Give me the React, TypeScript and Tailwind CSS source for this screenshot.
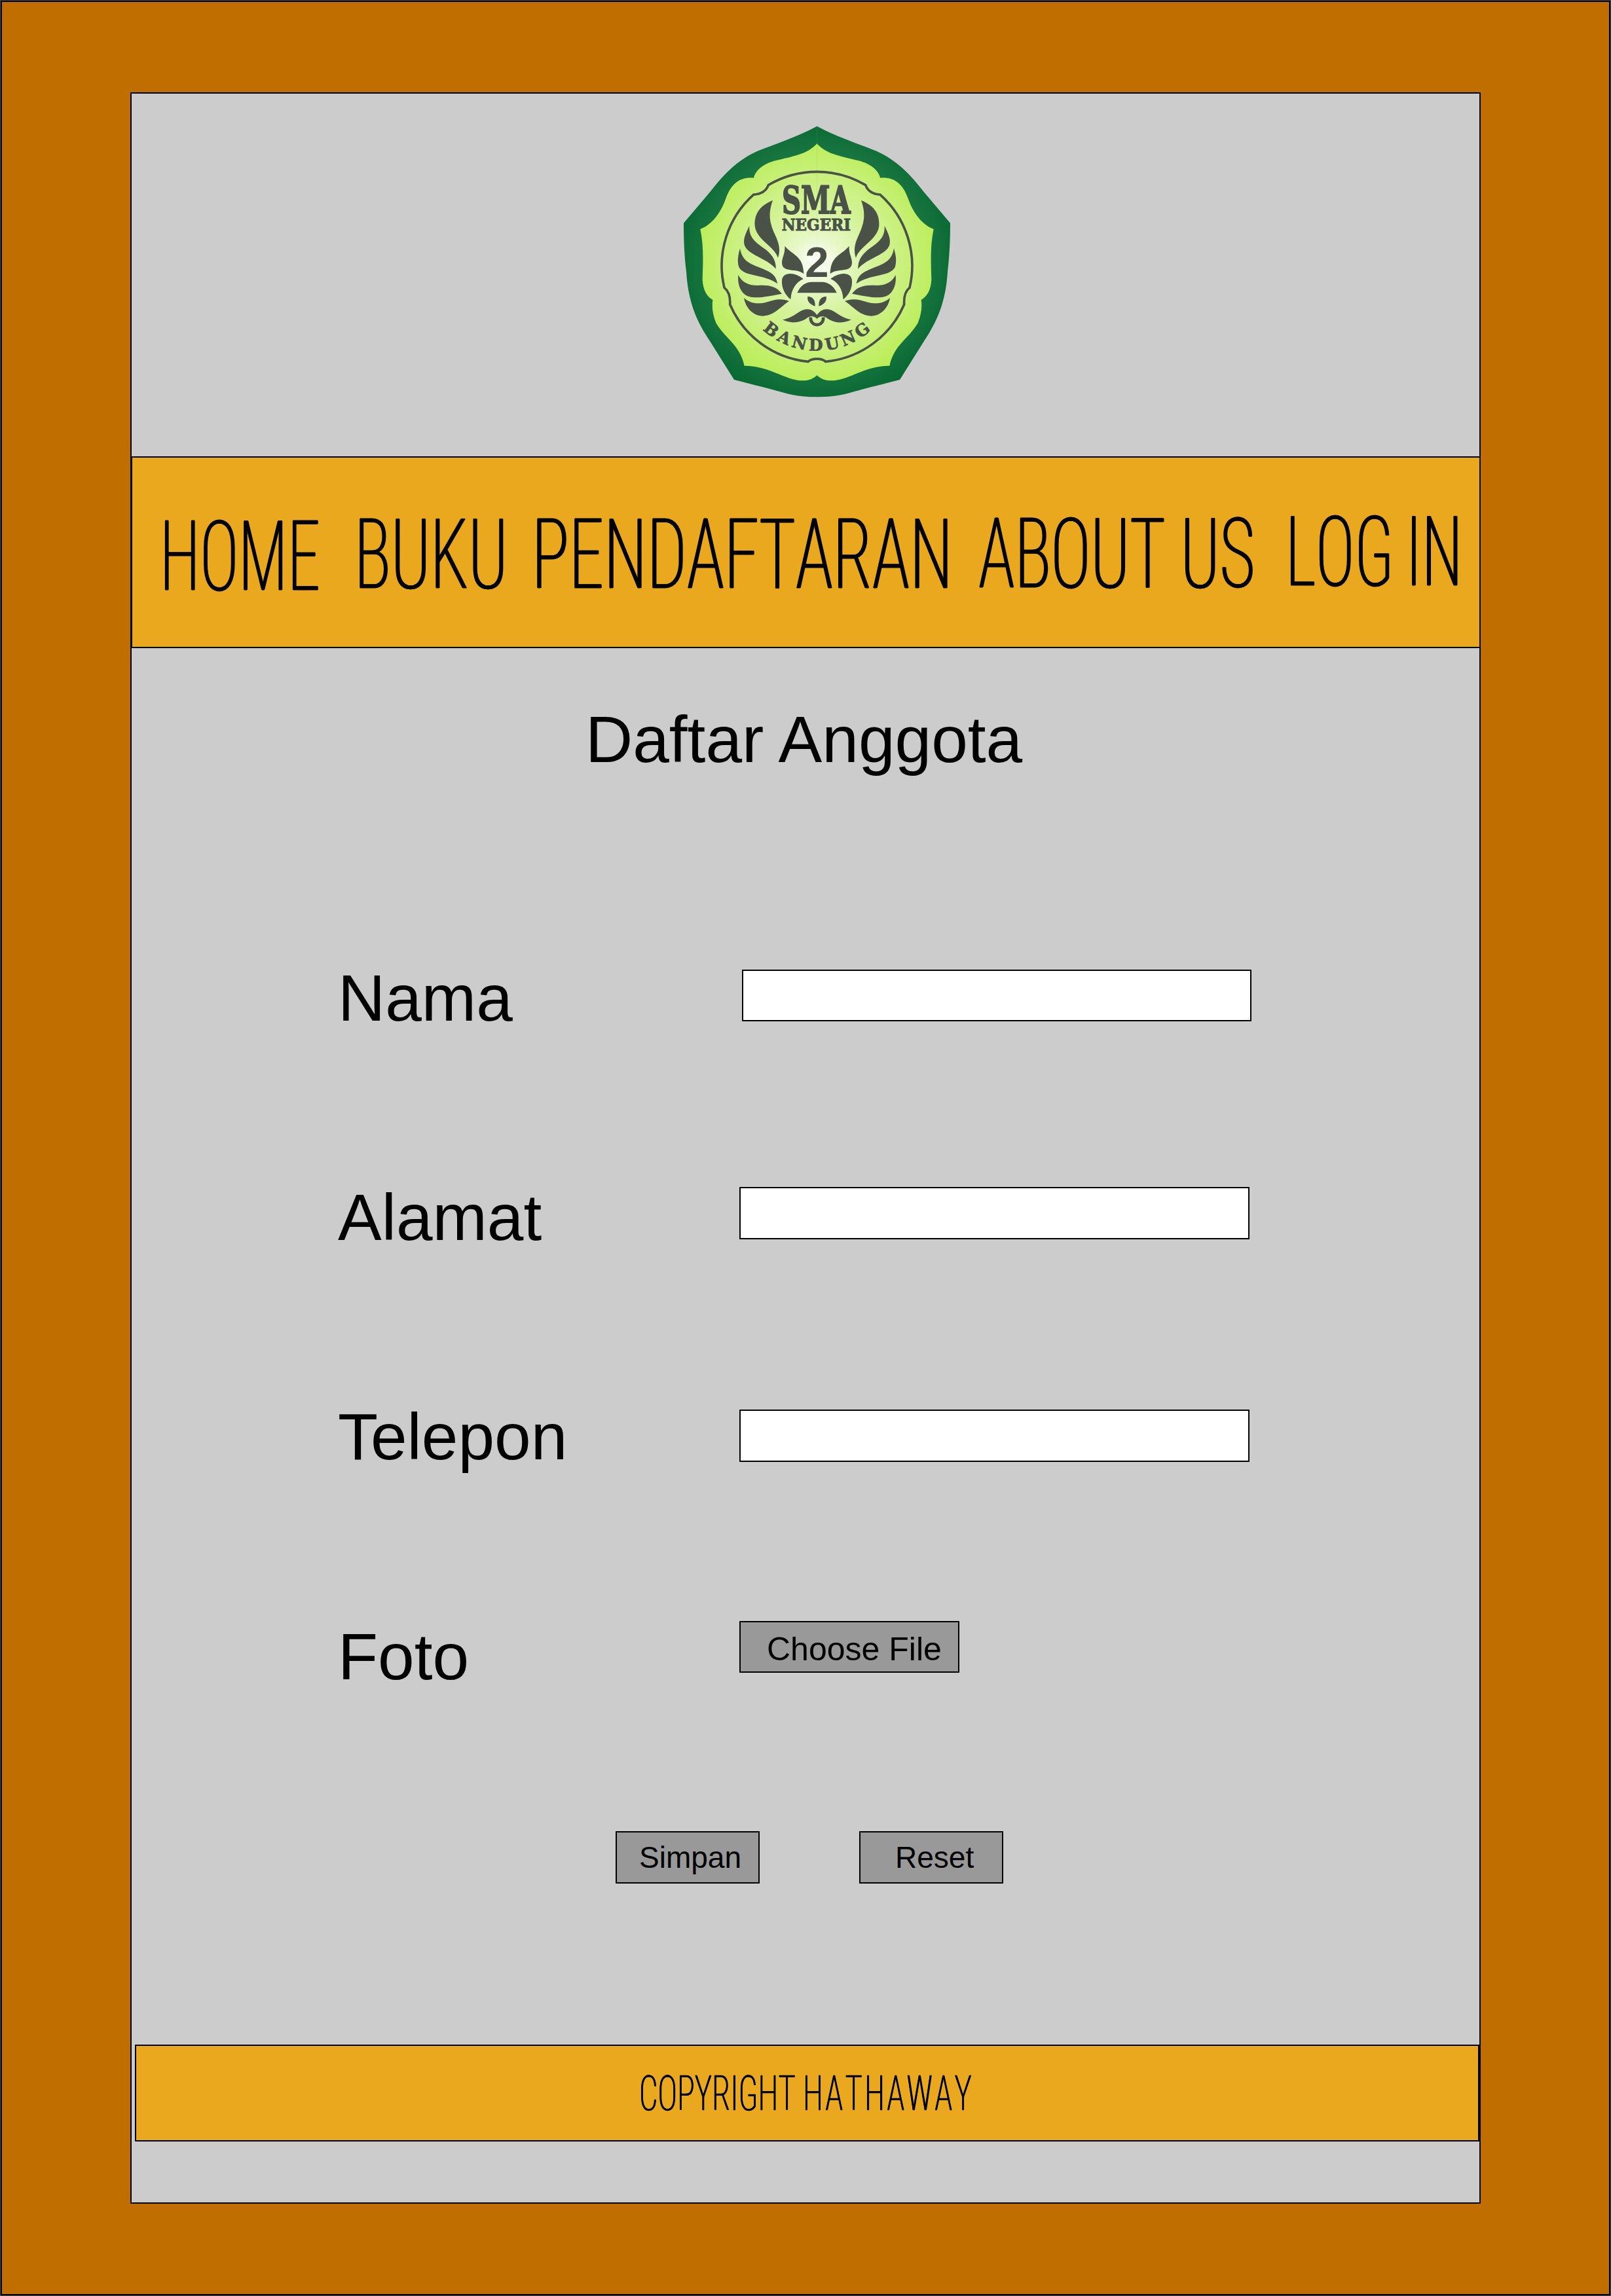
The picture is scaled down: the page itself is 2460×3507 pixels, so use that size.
const INK = "#4a5248";

const HALVES = ["translate(0 0)", "translate(1365 0) scale(-1 1)"];

function Wing() {
  return (
    <g fill={INK}>
      <path d="M480 408 C412 435 395 480 398 525 C405 590 490 620 504 672 C515 640 512 610 490 565 C465 510 458 470 480 408Z" />
      <path d="M373 525 C350 570 345 590 350 612 C365 660 450 670 494 722 C495 690 485 665 450 635 C400 600 370 580 373 525Z" />
      <path d="M330 628 C318 670 318 690 325 715 C350 760 440 745 502 790 C495 755 480 740 430 720 C380 700 340 690 330 628Z" />
      <path d="M322 750 C318 790 330 820 350 838 C380 865 450 850 522 836 C495 800 460 795 410 798 C370 798 340 785 322 750Z" />
      <path d="M348 855 C355 900 390 938 435 938 C490 935 515 895 555 870 C520 855 490 862 450 875 C410 885 375 880 348 855Z" />
      <path d="M535 617 C570 660 620 660 622 745 C590 715 520 745 522 690 C525 665 537 650 535 617Z" />
      <path d="M522 775 C525 735 580 735 620 768 C585 785 565 815 562 862 C535 840 520 810 522 775Z" />
      <path d="M640 848 C665 850 675 865 674 893 C650 885 636 870 640 848Z" />
      <path d="M684 935 C660 900 630 900 600 920 C570 940 550 950 525 955 C560 975 610 970 640 945 C655 936 672 940 684 952Z" />
    </g>
  );
}

function Emblem() {
  return (
    <svg viewBox="0 0 1380 1380" className="h-[460px] w-[460px]" role="img" aria-label="SMA Negeri 2 Bandung">
      <defs>
        <radialGradient id="lime" gradientUnits="userSpaceOnUse" cx="682" cy="690" r="545">
          <stop offset="0" stopColor="#ffffff" />
          <stop offset="0.22" stopColor="#e6f8c6" />
          <stop offset="0.45" stopColor="#d6f39d" />
          <stop offset="1" stopColor="#bcee5c" />
        </radialGradient>
        <radialGradient id="green" gradientUnits="userSpaceOnUse" cx="682" cy="690" r="680">
          <stop offset="0.7" stopColor="#1c7741" />
          <stop offset="1" stopColor="#056730" />
        </radialGradient>
        <path id="arc" d="M433 1000 A371 371 0 0 0 934 1000" />
      </defs>
      {HALVES.map((t) => (
        <path key={t} transform={t} fill="url(#green)" d="M683 68 C590 118 490 150 410 182 C300 232 240 310 180 385 L72 512 C72 600 76 670 84 735 C92 870 130 960 190 1050 L303 1230 C400 1255 480 1275 540 1292 C590 1305 640 1309 684 1309Z" />
      ))}
      {HALVES.map((t) => (
        <path key={t} transform={t} fill="url(#lime)" d="M683 148 C640 195 580 205 510 222 C440 235 400 270 393 305 C330 300 290 330 265 400 C240 470 200 520 148 540 C165 620 160 700 158 770 C160 820 180 850 205 864 C200 900 205 930 220 970 C260 1040 330 1070 350 1166 C400 1165 450 1180 510 1205 C580 1235 640 1250 684 1208Z" />
      ))}
      <path
        fill="none"
        stroke={INK}
        strokeWidth="11"
        d="M460 338 A438 438 0 0 1 905 338 C915 365 940 380 972 382 A436 436 0 0 1 1107 808 C1085 825 1080 850 1082 885 A436 436 0 0 1 722 1147 C705 1130 660 1130 642 1147 A436 436 0 0 1 284 885 C286 850 280 825 258 808 A436 436 0 0 1 392 382 C425 380 450 365 460 338Z"
      />
      {HALVES.map((t) => (
        <g key={t} transform={t}>
          <Wing />
        </g>
      ))}
      <path fill={INK} d="M592 832 C605 800 630 782 660 782 L708 782 C740 785 762 805 773 832Z" />
      <path fill="none" stroke={INK} strokeWidth="14" d="M654 944 A29 29 0 1 0 711 944" />
      <g fill={INK} stroke={INK} fontWeight="700" fontFamily='"DejaVu Serif", serif'>
        <text x="522" y="468" fontSize="172" strokeWidth="6" textLength="314" lengthAdjust="spacingAndGlyphs">SMA</text>
        <text x="521" y="545" fontSize="75" strokeWidth="3" textLength="316" lengthAdjust="spacingAndGlyphs">NEGERI</text>
        <text fontSize="75" strokeWidth="2">
          <textPath href="#arc" textLength="545" lengthAdjust="spacing">BANDUNG</textPath>
        </text>
        <text x="682" y="760" fontSize="195" strokeWidth="0" textAnchor="middle" fontFamily='"Liberation Sans", sans-serif'>2</text>
      </g>
    </svg>
  );
}

const condensed =
  "block w-max origin-top-left whitespace-pre font-['Roboto',sans-serif] font-extralight leading-none [font-kerning:none] [font-stretch:75%]";
const navText = `${condensed} [-webkit-text-stroke:0.8px_currentColor] [text-shadow:1.6px_0_currentColor,-1.6px_0_currentColor]`;

const navItems = [
  { label: "HOME", box: "mt-[77px] w-[297px]", fit: "scale-x-[0.672]" },
  { label: "BUKU", box: "mt-[74px] w-[271px]", fit: "scale-x-[0.702]" },
  { label: "PENDAFTARAN", box: "mt-[74px] w-[682px]", fit: "scale-x-[0.715]" },
  { label: "ABOUT US", box: "mt-[73px] w-[469px]", fit: "scale-x-[0.695]" },
  { label: "LOG IN", box: "mt-[70px] w-[270px]", fit: "scale-x-[0.675] [word-spacing:-6px]" },
];

const fields = [
  { label: "Nama", row: "h-[335px]", text: "w-[617px]", input: "mt-[7px] h-[79px] w-[778px]" },
  { label: "Alamat", row: "h-[335px]", text: "w-[613px]", input: "mt-[4px] h-[80px] w-[779px]" },
  { label: "Telepon", row: "h-[336px]", text: "w-[613px]", input: "mt-[9px] h-[80px] w-[779px]" },
];

export default function App() {
  return (
    <div className="h-[3507px] w-[2460px] bg-[#4a4a4a] p-px font-['Liberation_Sans',sans-serif] text-black">
      <div className="flex h-full border-2 border-black bg-[#c06e00] pl-[196px] pt-[138px]">
        <main className="flex h-[3225px] w-[2062px] flex-col border-2 border-black bg-[#ccc]">
          <header className="h-[554px] pl-[819px] pt-[27px]">
            <Emblem />
          </header>
          <nav className="-ml-px -mr-[2px] flex h-[293px] items-start border-2 border-black bg-[#e9a81d] pl-[42px] text-[149px]">
            {navItems.map((item) => (
              <a key={item.label} className={item.box}>
                <span className={`${navText} ${item.fit}`}>{item.label}</span>
              </a>
            ))}
          </nav>
          <h1 className="mt-[89px] pl-[693px] text-[100px] leading-none">Daftar Anggota</h1>
          <form className="mt-[295px] flex flex-col pl-[315px] text-[100px] leading-none">
            {fields.map((field) => (
              <label key={field.label} className={`flex ${field.row}`}>
                <span className={field.text}>{field.label}</span>
                <input className={`border-2 border-black bg-white ${field.input}`} />
              </label>
            ))}
            <div className="flex h-[317px]">
              <span className="w-[613px]">Foto</span>
              <button type="button" className="-mt-[4px] h-[79px] w-[336px] border-2 border-black bg-[#999] pl-[40px] pt-[6px] text-left text-[50px] leading-none">
                Choose File
              </button>
            </div>
            <div className="-ml-px flex gap-[152px] pl-[425px] text-[46px]">
              <button type="button" className="h-[80px] w-[220px] border-2 border-black bg-[#999] pl-[34px] text-left leading-[74px]">
                Simpan
              </button>
              <button type="button" className="h-[80px] w-[220px] border-2 border-black bg-[#999] pl-[53px] text-left leading-[76px]">
                Reset
              </button>
            </div>
          </form>
          <footer className="ml-[5px] mt-[246px] h-[148px] w-[2053px] border-2 border-black bg-[#e9a81d] pl-[768px] pt-[35px] text-[75px]">
            <p className={`${condensed} scale-x-[0.67] [-webkit-text-stroke:0.4px_currentColor] [text-shadow:0.8px_0_currentColor,-0.8px_0_currentColor]`}>
              COPYRIGHT <span className="tracking-[5px]">HATHAWAY</span>
            </p>
          </footer>
        </main>
      </div>
    </div>
  );
}
